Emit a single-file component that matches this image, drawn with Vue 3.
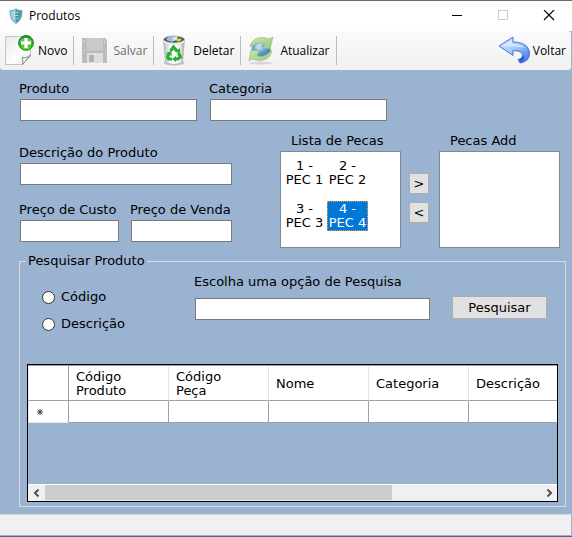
<script setup>
import { ref } from 'vue'

const columns = ['Código Produto', 'Código Peça', 'Nome', 'Categoria', 'Descrição']
const pieces = [1, 2, 3, 4]
const selected = ref(4)
const criterion = ref('')
</script>

<template>
  <div class="window">
    <header class="titlebar">
      <svg class="app-icon" viewBox="0 0 14 16" aria-hidden="true">
        <path d="M7 .8C5 2.300 3 2.800 1 2.500C1 8 2 12.500 7 15.500C12 12.500 13 8 13 2.500C11 2.800 9 2.300 7 .8Z" fill="#9fd2d5" stroke="#62a9b1" />
        <path d="M7 1.500C9 2.800 11 3 12.600 2.800C12.500 8 11.500 12 7 15Z" fill="#4b9da7" />
        <path d="M5 4.500h4M5 7.500h4M5.500 10.500h3" stroke="#e6fafa" fill="none" />
        <path d="M7 3v10" stroke="#2f7b86" stroke-width=".8" />
      </svg>
      <h1>Produtos</h1>
      <div class="captions">
        <button type="button" aria-label="Minimizar">
          <svg viewBox="0 0 12 12"><path d="M1 5.500h10" stroke="#000" /></svg>
        </button>
        <button type="button" aria-label="Maximizar" disabled>
          <svg viewBox="0 0 12 12"><path d="M1.500 .5h9v9h-9z" stroke="#ccc" fill="none" /></svg>
        </button>
        <button type="button" aria-label="Fechar">
          <svg viewBox="0 0 12 12"><path d="M1 0l10 10M11 0L1 10" stroke="#000" stroke-width="1.100" /></svg>
        </button>
      </div>
    </header>

    <nav class="toolbar">
      <button type="button" class="tool">
        <svg viewBox="0 0 32 32" aria-hidden="true">
          <defs>
            <linearGradient id="paper" x1="0" y1="0" x2="1" y2="1">
              <stop offset="0" stop-color="#e8e8e8" /><stop offset=".6" stop-color="#fff" /><stop offset="1" stop-color="#ddd" />
            </linearGradient>
            <radialGradient id="plus" cx=".5" cy=".85" r=".8">
              <stop offset="0" stop-color="#75e238" /><stop offset="1" stop-color="#118c18" />
            </radialGradient>
          </defs>
          <path d="M2.500 1.500h25v20l-8 8H2.500z" fill="url(#paper)" stroke="#c5c5c5" />
          <path d="M19.500 29.500c.5-3 .5-4.500-.5-7c3 .5 6 0 8.500-2.500z" fill="#f4f4f4" stroke="#8b8b8b" />
          <circle cx="23" cy="7.900" r="7.400" fill="url(#plus)" stroke="#158719" />
          <path d="M16.500 7c2-6 11-6 13 0c-4 2-9 2-13 0z" fill="#fff" opacity=".3" />
          <path d="M23 3v10M18 8h10" stroke="#fff" stroke-width="3.200" />
        </svg>
        <span>Novo</span>
      </button>
      <i class="divider"></i>
      <button type="button" class="tool" disabled>
        <svg viewBox="0 0 32 32" aria-hidden="true">
          <path d="M4 3h23l2 2v23H4z" fill="#bcbcbc" />
          <path d="M9 3h16v12H9z" fill="#cacaca" />
          <path d="M6 5h1v2H6zM26 6h1v2h-1z" fill="#ddd" />
          <path d="M9 18h16v10H9z" fill="#dedede" />
          <path d="M11 20h5v7h-5z" fill="#b1b1b1" />
          <path d="M4 15.500h25" stroke="#c4c4c4" />
        </svg>
        <span>Salvar</span>
      </button>
      <i class="divider"></i>
      <button type="button" class="tool">
        <svg viewBox="0 0 32 32" aria-hidden="true">
          <defs>
            <linearGradient id="bin"><stop offset="0" stop-color="#bbb" /><stop offset=".35" stop-color="#fff" /><stop offset=".75" stop-color="#f1f1f1" /><stop offset="1" stop-color="#aaa" /></linearGradient>
          </defs>
          <ellipse cx="16" cy="28" rx="10.500" ry="2.500" fill="#c4c4c4" />
          <path d="M5.500 5l2 22c3 3 14 3 17 0l2-22z" fill="url(#bin)" stroke="#aaa" stroke-width=".7" />
          <ellipse cx="16" cy="4.500" rx="10.500" ry="3.500" fill="#454d55" stroke="#bbb" />
          <path d="M8 4l4-3 4 1-1 5-5-1z" fill="#9ac1dc" />
          <path d="M14 2l5-1 1 4-5 1z" fill="#dce2e5" />
          <path d="M18 5l4-2 2 2-4 2z" fill="#e6cf27" />
          <path d="M5.500 6c5 4 16 4 21 0" fill="none" stroke="#eee" stroke-width="1.500" />
          <g fill="none" stroke="#27ad3b" stroke-width="3.200">
            <path d="M12.500 16l3-4 3.500 4" />
            <path d="M20.500 18l2 4-3 2h-2.500" />
            <path d="M14 24h-3.500l-1-2.500 2-3.500" />
          </g>
          <path d="M17 17l5 1v-5zM18 21v6l-4-3zM8 18l5-2 1 5z" fill="#27ad3b" />
        </svg>
        <span>Deletar</span>
      </button>
      <i class="divider"></i>
      <button type="button" class="tool">
        <svg viewBox="0 0 32 32" aria-hidden="true">
          <defs>
            <radialGradient id="globe" cx=".4" cy=".3" r=".75"><stop offset="0" stop-color="#a6d3ef" /><stop offset="1" stop-color="#286caf" /></radialGradient>
            <linearGradient id="leaf" x1="0" y1="0" x2="1" y2="1"><stop offset="0" stop-color="#cbe6a9" /><stop offset="1" stop-color="#9ac783" /></linearGradient>
          </defs>
          <ellipse cx="16" cy="28" rx="12" ry="1.500" fill="#d7d7d7" />
          <circle cx="16" cy="14.500" r="9.500" fill="url(#globe)" />
          <path d="M11 10l4-3 4 1-3 3 3 3-5 2-4-3z" fill="#d2e9ef" opacity=".5" />
          <path d="M5 12C6 5 13 1 21 3l3 1 4-2-3 12-8-1 3-3c-3-3-8-3-15 2z" fill="url(#leaf)" stroke="#8db47a" stroke-width=".6" />
          <path d="M27 15c-1 8-8 12-16 10l-4-1-3 2 2-11 9 1-3 4c4 3 9 1 15-5z" fill="url(#leaf)" stroke="#8db47a" stroke-width=".6" />
        </svg>
        <span>Atualizar</span>
      </button>
      <i class="divider"></i>
      <button type="button" class="tool back">
        <svg viewBox="0 0 32 32" aria-hidden="true">
          <defs>
            <linearGradient id="arrow" x1="0" y1="0" x2="1" y2="1"><stop offset="0" stop-color="#d8ecff" /><stop offset=".5" stop-color="#9ec7fb" /><stop offset="1" stop-color="#326fe0" /></linearGradient>
          </defs>
          <path d="M1 11L15 2v5c10 0 16 4 16.500 11c0 6-3 9-9.500 10l-2-3.500c6-1 6-7 0-8.500l-5-.5v5z" fill="url(#arrow)" stroke="#4b74d6" stroke-linejoin="round" />
          <path d="M21 25l5-5c1 3 0 6-3 8z" fill="#2860d5" />
          <path d="M4 11l10-6v4c6 0 10 1 13 4c-5-2-14-1-23-2z" fill="#fff" opacity=".5" />
        </svg>
        <span>Voltar</span>
      </button>
    </nav>

    <main class="body">
      <form class="product" @submit.prevent>
        <div class="names">
          <div class="field"><label for="produto">Produto</label><input id="produto" type="text" /></div>
          <div class="field"><label for="categoria">Categoria</label><input id="categoria" type="text" /></div>
        </div>
        <div class="details">
          <div class="values">
            <div class="field wide"><label for="descricao">Descrição do Produto</label><input id="descricao" type="text" /></div>
            <div class="field"><label for="custo">Preço de Custo</label><input id="custo" type="text" /></div>
            <div class="field"><label for="venda">Preço de Venda</label><input id="venda" type="text" /></div>
          </div>
          <div class="pieces">
            <span id="lista" class="caption">Lista de Pecas</span>
            <ul class="listbox" role="listbox" aria-labelledby="lista">
              <li v-for="n in pieces" :key="n" role="option" :aria-selected="n === selected" :class="{ selected: n === selected }" @click="selected = n">{{ n }} -<br />PEC {{ n }}</li>
            </ul>
          </div>
          <div class="movers">
            <button type="button">&gt;</button>
            <button type="button">&lt;</button>
          </div>
          <div class="pieces">
            <span id="add" class="caption">Pecas Add</span>
            <ul class="listbox" role="listbox" aria-labelledby="add"></ul>
          </div>
        </div>
      </form>

      <fieldset class="search">
        <legend>Pesquisar Produto</legend>
        <div class="query">
          <div class="radios">
            <label><input v-model="criterion" type="radio" name="criterio" value="codigo" />Código</label>
            <label><input v-model="criterion" type="radio" name="criterio" value="descricao" />Descrição</label>
          </div>
          <div class="field"><label for="opcao">Escolha uma opção de Pesquisa</label><input id="opcao" type="text" /></div>
          <button type="button" class="submit">Pesquisar</button>
        </div>
        <div class="grid">
          <div class="viewport">
            <table>
              <thead>
                <tr><th class="mark"></th><th v-for="c in columns" :key="c">{{ c }}</th></tr>
              </thead>
              <tbody>
                <tr><td class="mark"><svg viewBox="0 0 6 6" aria-label="Nova linha"><path d="M3 0v6M0 3h6M.8 .8l4.400 4.400M5.200 .8L.8 5.200" /></svg></td><td v-for="c in columns" :key="c"></td></tr>
              </tbody>
            </table>
          </div>
          <div class="scrollbar">
            <button type="button" aria-label="Rolar para a esquerda"><svg viewBox="0 0 8 8"><path d="M5.500 .5L2 4l3.500 3.500" /></svg></button>
            <div class="track"><div class="thumb"></div></div>
            <button type="button" aria-label="Rolar para a direita"><svg viewBox="0 0 8 8"><path d="M2.500 .5L6 4L2.500 7.500" /></svg></button>
          </div>
        </div>
      </fieldset>
    </main>
    <footer class="status"></footer>
  </div>
</template>

<style>
body { margin: 0; }
</style>

<style scoped>
* { box-sizing: border-box; }
.window {
  display: flex;
  flex-direction: column;
  min-height: 100vh;
  border-top: 1px solid #6b6969;
  border-bottom: 1px solid #59677c;
  background: #99b3d1;
  color: #000;
  font: 13px/16px Verdana, "DejaVu Sans", sans-serif;
}
button { font: inherit; color: inherit; padding: 0; }
.titlebar {
  display: flex;
  align-items: center;
  height: 30px;
  padding-left: 9px;
  background: #fff;
}
.app-icon { width: 14px; height: 16px; }
h1 { margin: 0 0 0 6px; font: 12px/16px "Open Sans", "Noto Sans", sans-serif; }
.captions { display: flex; margin-left: auto; }
.captions button { display: grid; place-items: center; width: 46px; height: 29px; border: 0; background: none; }
.captions svg { width: 12px; height: 12px; }

.toolbar {
  display: flex;
  align-items: center;
  height: 39px;
  margin-right: 1px;
  padding: 0 5px 0 3px;
  border-radius: 0 3px 3px 3px;
  background: linear-gradient(#fbfbfb, #f0f0f0);
  font: 12px/16px "Open Sans", "Noto Sans", sans-serif;
}
.tool { display: flex; align-items: center; gap: 3px; border: 0; background: none; }
.tool svg { width: 32px; height: 32px; }
.tool:disabled { color: #6d6d6d; }
.divider { width: 1px; height: 29px; margin: 0 4px 0 6px; background: #bdbdbd; }
.back { margin-left: auto; }

.body { flex: 1; padding: 11px 6px 7px 19px; }
.product { padding-right: 6px; }
.field { display: flex; flex-direction: column; gap: 2px; min-width: 0; }
.field label { white-space: nowrap; }
.field input {
  width: calc(100% - 1px);
  height: 22px;
  margin-left: 1px;
  padding: 2px 4px;
  border: 1px solid #7a7a7a;
  background: #fff;
  font: inherit;
}
.names { display: grid; grid-template-columns: 178fr 178fr 161fr; gap: 12px; }
.details { display: grid; grid-template-columns: 261fr 121fr 38px 121fr; margin-top: 12px; }
.values {
  display: grid;
  grid-template-columns: 100fr 102fr;
  align-content: start;
  gap: 17px 11px;
  margin-right: 48px;
  padding-top: 12px;
}
.wide { grid-column: 1 / -1; }
.caption { display: block; padding-left: 11px; margin-bottom: 2px; }
.listbox {
  display: grid;
  grid-template-columns: 41px 41px;
  align-content: start;
  gap: 13px 2px;
  height: 97px;
  margin: 0;
  padding: 6px 3px;
  border: 1px solid #828790;
  background: #fff;
  list-style: none;
  text-align: center;
  line-height: 14px;
}
.listbox li { border: 1px solid transparent; white-space: nowrap; }
.listbox .selected { border: 1px dotted #ff9c3a; background: #0078d7; color: #fff; }
.movers { display: flex; flex-direction: column; align-items: center; gap: 8px; padding: 40px 2px 0 0; }
.movers button, .submit { border: 1px solid #adadad; background: #e1e1e1; }
.movers button { width: 20px; height: 21px; }

.search { min-width: 0; margin: 5px 0 0; padding: 0 7px 4px; border: 1px solid #dcdcdc; }
legend { margin-left: -1px; padding: 0 2px; }
.query { display: grid; grid-template-columns: 145fr 236fr 95fr; column-gap: 22px; padding-right: 11px; }
.query .field { padding-top: 5px; gap: 8px; }
.radios { display: flex; flex-direction: column; gap: 11px; padding: 20px 0 0 15px; }
.radios label { display: flex; align-items: center; gap: 6px; }
.radios input { width: 13px; height: 13px; margin: 0; appearance: none; border: 1px solid #333; border-radius: 50%; background: #fff; }
.radios input:checked { background: radial-gradient(#333 3px, #fff 4px); }
.submit { height: 23px; margin-top: 27px; }

.grid { margin-top: 32px; border: 1px solid #000; }
.viewport { height: 119px; overflow: hidden; }
table { width: 541px; table-layout: fixed; border-collapse: separate; border-spacing: 0; border-top: 1px solid #a0a0a0; }
th, td { border-right: 1px solid #a0a0a0; border-bottom: 1px solid #a0a0a0; background: #fff; font-weight: normal; }
th { width: 100px; height: 35px; padding: 1px 24px 0 7px; border-right-color: #e5e5e5; text-align: left; line-height: 14px; }
td { height: 22px; padding: 0; }
.mark { width: 41px; padding: 0 0 0 8px; border-left: 1px solid #e5e5e5; }
.mark svg { display: block; width: 6px; height: 6px; stroke: #444; stroke-width: 1; }
th.mark { border-right-color: #a0a0a0; }
td.mark { border-bottom-color: #e5e5e5; }
.scrollbar { display: flex; height: 17px; background: #f0f0f0; border-top: 1px solid #fff; }
.scrollbar button { display: grid; place-items: center; width: 17px; border: 0; background: none; }
.scrollbar svg { width: 8px; height: 8px; fill: none; stroke: #505050; stroke-width: 2; }
.track { flex: 1; }
.thumb { width: 70%; height: 15px; background: #cdcdcd; }
.status { height: 22px; margin-right: 1px; border-top: 1px solid #d7d7d7; border-bottom: 1px solid #99b3d1; background: #f0f0f0; }
</style>
